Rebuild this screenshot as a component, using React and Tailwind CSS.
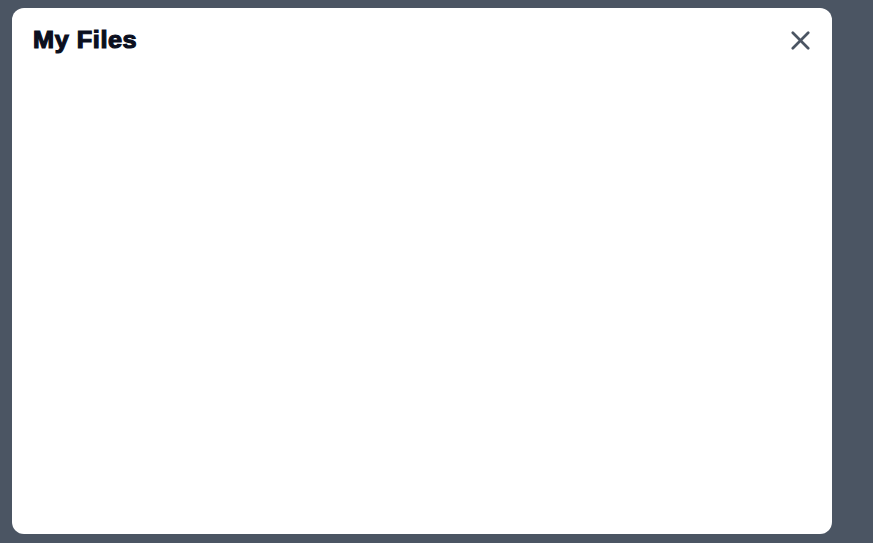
export default function App() {
  return (
    <div className="h-[543px] w-[873px] bg-[#4b5563] pt-2 pl-3">
      <div className="flex h-[526px] w-[820px] flex-col rounded-xl bg-white">
        <div className="flex items-center justify-between pl-[21px] pr-5 pt-[18px]">
          <h2 className="origin-left scale-x-[1.1] font-['Liberation_Sans',Arial,sans-serif] text-[23px] font-bold leading-[28px] tracking-[0.5px] text-[#0b0f1e] [-webkit-text-stroke:1.1px_#0b0f1e]">
            My Files
          </h2>
          <button className="mt-px flex h-6 w-6 items-center justify-center text-[#4b5563]" aria-label="Close">
            <svg width="19" height="19" viewBox="0 0 19 19" fill="none" stroke="currentColor" strokeWidth="2.7" strokeLinecap="round">
              <line x1="1.8" y1="1.8" x2="17.2" y2="17.2" />
              <line x1="17.2" y1="1.8" x2="1.8" y2="17.2" />
            </svg>
          </button>
        </div>
      </div>
    </div>
  );
}
